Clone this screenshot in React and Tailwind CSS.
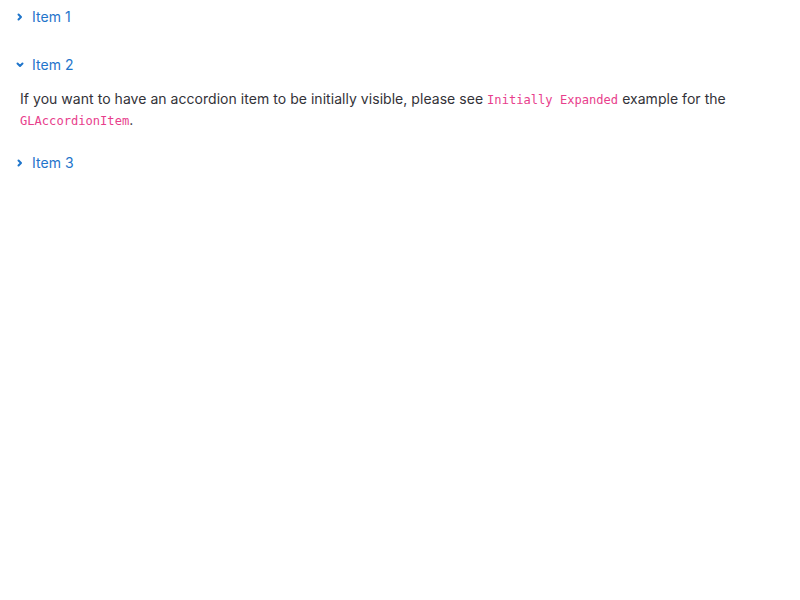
import { useState } from 'react';

const ITEMS = [
  { id: 1, title: 'Item 1' },
  { id: 2, title: 'Item 2' },
  { id: 3, title: 'Item 3' },
];

function Chevron({ open }) {
  return (
    <svg className="w-4 h-4 shrink-0" viewBox="0 0 16 16" fill="none" stroke="currentColor" strokeWidth="2" strokeLinecap="round" strokeLinejoin="round">
      {open ? <polyline points="5.5 6.5 8 9 10.5 6.5" /> : <polyline points="6.5 5.5 9 8 6.5 10.5" />}
    </svg>
  );
}

export default function App() {
  const [open, setOpen] = useState(2);

  return (
    <div className="pt-px font-['Inter',sans-serif] text-sm text-[#333238] tracking-[0.04px]">
      {ITEMS.map((item) => {
        const isOpen = open === item.id;
        return (
          <div key={item.id} className="mb-4">
            <h3 className="m-0">
              <button
                onClick={() => setOpen(isOpen ? null : item.id)}
                className="flex items-center gap-1 h-8 pl-3 pr-2 text-sm text-[#1f75cb] cursor-pointer"
              >
                <Chevron open={isOpen} />
                <span>{item.title}</span>
              </button>
            </h3>
            {isOpen && (
              <div className="px-5 pt-2 leading-5">
                If you want to have an accordion item to be initially visible, please see{' '}
                <code className="font-['DejaVu_Sans_Mono',monospace] text-[12.1px] tracking-normal text-[#e83e8c]">Initially Expanded</code>{' '}
                example for the{' '}
                <code className="font-['DejaVu_Sans_Mono',monospace] text-[12.1px] tracking-normal text-[#e83e8c]">GLAccordionItem</code>.
              </div>
            )}
          </div>
        );
      })}
    </div>
  );
}
